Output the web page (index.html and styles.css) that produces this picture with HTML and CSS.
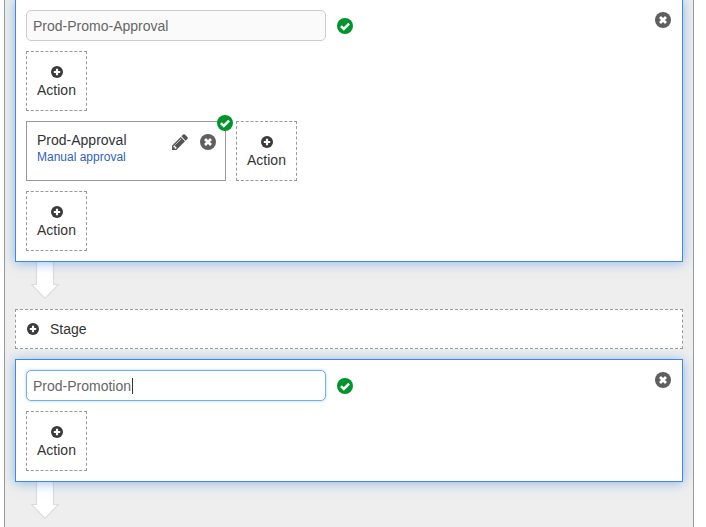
FILE: index.html
```html
<!DOCTYPE html>
<html lang="en">
<head>
<meta charset="utf-8">
<title>Pipeline</title>
<link rel="stylesheet" href="styles.css">
</head>
<body>
<svg class="defs" width="0" height="0" aria-hidden="true">
  <symbol id="plus" viewBox="0 0 12 12"><circle cx="6" cy="6" r="6" fill="#3a3a3a"/><path d="M6 2.8v6.4M2.8 6h6.4" stroke="#fff" stroke-width="2.2"/></symbol>
  <symbol id="times" viewBox="0 0 16 16"><circle cx="8" cy="8" r="8" fill="#5f5f5f"/><path d="M5 5l6 6M11 5l-6 6" stroke="#fff" stroke-width="2.8"/></symbol>
  <symbol id="check" viewBox="0 0 16 16"><circle cx="8" cy="8" r="8" fill="#00942c"/><path d="M3.9 8.1l2.9 2.9 5.3-5.3" fill="none" stroke="#fff" stroke-width="2.5"/></symbol>
  <symbol id="pencil" viewBox="128 128 1536 1536"><path d="M491 1536l91-91-235-235-91 91v107h128v128h107zm523-928q0-22-22-22-10 0-17 7l-542 542q-7 7-7 17 0 22 22 22 10 0 17-7l542-542q7-7 7-17zm-54-192l416 416-832 832h-416v-416zm683 96q0 53-37 90l-166 166-416-416 166-165q36-38 90-38 53 0 91 38l235 234q37 39 37 91z" fill="#555"/></symbol>
  <symbol id="arrow" viewBox="0 0 28 37"><path d="M5.500 0v22.500H.5L14 36.300 27.500 22.500h-5V0" fill="#fff" stroke="#dcdcdc" stroke-width="1.200"/></symbol>
</svg>
<main class="canvas">
  <section class="stage">
    <button class="stage-close" type="button" aria-label="Delete stage"><svg class="icon-close"><use href="#times"/></svg></button>
    <div class="name-row">
      <div class="name-input">Prod-Promo-Approval</div>
      <svg class="icon-ok"><use href="#check"/></svg>
    </div>
    <div class="action-row">
      <div class="add-action"><svg class="icon-plus"><use href="#plus"/></svg><span>Action</span></div>
    </div>
    <div class="action-row">
      <div class="action-card">
        <div class="action-text">
          <div class="action-name">Prod-Approval</div>
          <div class="action-type">Manual approval</div>
        </div>
        <svg class="icon-pencil"><use href="#pencil"/></svg>
        <svg class="icon-close"><use href="#times"/></svg>
        <svg class="icon-ok card-ok"><use href="#check"/></svg>
      </div>
      <div class="add-action"><svg class="icon-plus"><use href="#plus"/></svg><span>Action</span></div>
    </div>
    <div class="action-row">
      <div class="add-action"><svg class="icon-plus"><use href="#plus"/></svg><span>Action</span></div>
    </div>
  </section>
  <svg class="arrow"><use href="#arrow"/></svg>
  <div class="add-stage"><svg class="icon-plus"><use href="#plus"/></svg><span>Stage</span></div>
  <section class="stage stage-second">
    <button class="stage-close" type="button" aria-label="Delete stage"><svg class="icon-close"><use href="#times"/></svg></button>
    <div class="name-row">
      <div class="name-input is-focused">Prod-Promotion<i class="caret"></i></div>
      <svg class="icon-ok"><use href="#check"/></svg>
    </div>
    <div class="action-row">
      <div class="add-action"><svg class="icon-plus"><use href="#plus"/></svg><span>Action</span></div>
    </div>
  </section>
  <svg class="arrow"><use href="#arrow"/></svg>
</main>
</body>
</html>
```

FILE: styles.css
```css
* { box-sizing: border-box; }
html, body { height: 100%; }
body {
  margin: 0;
  overflow: hidden;
  background: #fff;
  color: #333;
  font: 14px/20px "Liberation Sans", Arial, sans-serif;
}
.defs { position: absolute; }
.canvas {
  width: 690px;
  height: 528px;
  margin: -1px 0 0 4px;
  padding: 0 10px;
  overflow: hidden;
  background: #eee;
  border-left: 1px solid #999;
  border-right: 1px solid #999;
}
.stage {
  position: relative;
  height: 263px;
  padding: 10px;
  background: #fff;
  border: 1px solid #3f8ae0;
  box-shadow: 0 1px 11px rgba(63, 138, 224, .55);
}
.stage-second { height: 123px; margin-top: 10px; }
.stage-close {
  position: absolute;
  top: 12px;
  right: 11px;
  display: flex;
  padding: 0;
  border: 0;
  background: none;
}
.name-row { display: flex; align-items: center; gap: 11px; }
.name-input {
  width: 300px;
  height: 31px;
  padding: 5px 6px;
  color: #666;
  background: #fafafa;
  border: 1px solid #ccc;
  border-radius: 5px;
}
.is-focused {
  background: #fff;
  border-color: #6cb2f0;
  box-shadow: 0 0 3px rgba(108, 178, 240, .6);
}
.caret {
  display: inline-block;
  width: 1px;
  height: 16px;
  margin-left: 1px;
  vertical-align: -3px;
  background: #333;
}
.action-row { display: flex; gap: 10px; margin-top: 10px; }
.add-action {
  display: flex;
  flex-direction: column;
  align-items: center;
  width: 61px;
  height: 60px;
  padding-top: 14px;
  border: 1px dashed #999;
}
.add-action span { margin-top: 2px; }
.action-card {
  position: relative;
  display: flex;
  width: 200px;
  height: 60px;
  padding: 9px 10px 8px;
  border: 1px solid #999;
}
.action-text { flex: 1; }
.action-name { line-height: 19px; }
.action-type { font-size: 12px; line-height: 14px; color: #2f5fc4; }
.icon-plus { width: 12px; height: 12px; flex: none; }
.icon-close { width: 16px; height: 16px; flex: none; }
.icon-ok { width: 16px; height: 16px; flex: none; }
.icon-pencil { width: 16px; height: 16px; margin: 3px 12px 0 0; flex: none; }
.action-card .icon-close { margin-top: 3px; margin-right: -1px; }
.card-ok { position: absolute; top: -7px; right: -8px; }
.arrow { display: block; width: 28px; height: 37px; margin: 0 0 10px 16px; }
.add-stage {
  display: flex;
  align-items: center;
  gap: 11px;
  height: 40px;
  padding-left: 11px;
  background: #fff;
  border: 1px dashed #999;
}
```
